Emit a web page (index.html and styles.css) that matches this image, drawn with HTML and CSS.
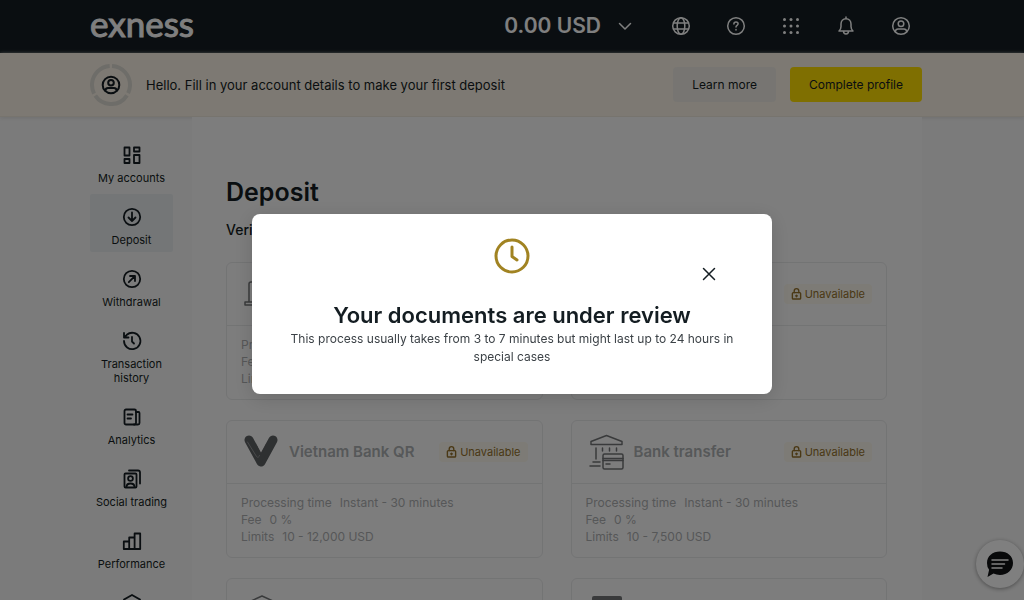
FILE: index.html
```html
<!DOCTYPE html>
<html lang="en">
<head>
<meta charset="utf-8">
<meta name="viewport" content="width=device-width, initial-scale=1">
<title>Deposit</title>
<link rel="stylesheet" href="styles.css">
</head>
<body>
<svg class="sprite" aria-hidden="true">
  <symbol id="user" viewBox="0 0 20 20"><circle cx="10" cy="10" r="8.3"/><circle cx="10" cy="7.8" r="2.8"/><path d="M4.3 15.6c.3-1.7 1.2-2.5 2.7-2.5h6c1.500 0 2.400.8 2.700 2.500"/></symbol>
  <symbol id="lock" viewBox="0 0 12 14"><rect x="1.500" y="5.500" width="9" height="7" rx="1"/><path d="M3.500 5.500V3.700a2.500 2.500 0 0 1 5 0v1.800M6 8.200v1.800M5 9h2"/></symbol>
</svg>
<header class="topbar">
  <div class="wrap topbar-row">
    <a class="logo" href="#">exness</a>
    <nav class="tools" aria-label="Account tools">
      <button class="balance" type="button">0.00 USD
        <svg class="chevron" viewBox="0 0 14 14"><path d="M1.500 4.500 7 10l5.500-5.500"/></svg>
      </button>
      <button class="tool" type="button" aria-label="Language"><svg viewBox="0 0 20 20"><circle cx="10" cy="10" r="8.300"/><ellipse cx="10" cy="10" rx="3.800" ry="8.300"/><path d="M2.500 7h15M2.500 13h15"/></svg></button>
      <button class="tool" type="button" aria-label="Help"><svg viewBox="0 0 20 20"><circle cx="10" cy="10" r="8.300"/><path d="M7.900 8c0-1.400 1-2 2.100-2s2.100.7 2.100 1.800c0 1.500-2.100 1.500-2.100 3.200M10 13.500v.5"/></svg></button>
      <button class="tool" type="button" aria-label="Apps"><svg class="dots" viewBox="0 0 20 20"><circle cx="3.500" cy="3.500" r="1.500"/><circle cx="10" cy="3.500" r="1.500"/><circle cx="16.500" cy="3.500" r="1.500"/><circle cx="3.500" cy="10" r="1.500"/><circle cx="10" cy="10" r="1.500"/><circle cx="16.500" cy="10" r="1.500"/><circle cx="3.500" cy="16.500" r="1.500"/><circle cx="10" cy="16.500" r="1.500"/><circle cx="16.500" cy="16.500" r="1.500"/></svg></button>
      <button class="tool" type="button" aria-label="Notifications"><svg viewBox="0 0 20 20"><path d="M10 1v1.500M3 15h14c-1.500-1.300-2-2.700-2-4.500V8c0-3-2-5.300-5-5.300S5 5 5 8v2.500c0 1.800-.5 3.200-2 4.500zM7.500 15c0 1.800 1 3 2.500 3s2.500-1.200 2.500-3"/></svg></button>
      <button class="tool" type="button" aria-label="Profile"><svg><use href="#user"/></svg></button>
    </nav>
  </div>
</header>
<section class="banner">
  <div class="wrap banner-row">
    <svg class="avatar" viewBox="0 0 42 42"><circle class="ring" cx="21" cy="21" r="19" pathLength="99" stroke-dasharray="31 2"/><use href="#user" x="11" y="11" width="20" height="20"/></svg>
    <p class="greeting">Hello. Fill in your account details to make your first deposit</p>
    <button class="btn btn-plain" type="button">Learn more</button>
    <button class="btn btn-brand" type="button">Complete profile</button>
  </div>
</section>
<div class="wrap page">
  <nav class="side" aria-label="Main">
    <a class="side-item" href="#"><svg viewBox="0 0 22 22"><path d="M3.500 3.500h5v8h-5zM13 3.500h5.500v4H13zM3.500 15h5v4h-5zM13 11h5.500v8H13z"/></svg>My accounts</a>
    <a class="side-item active" href="#" aria-current="page"><svg viewBox="0 0 22 22"><circle cx="11" cy="11" r="8.200"/><path d="M11 6.500v8.500M7.500 11.500 11 15l3.500-3.500"/></svg>Deposit</a>
    <a class="side-item" href="#"><svg viewBox="0 0 22 22"><circle cx="11" cy="11" r="8.200"/><path d="m7.800 14.200 6-6M9 8h5v5"/></svg>Withdrawal</a>
    <a class="side-item" href="#"><svg viewBox="0 0 22 22"><path d="M3 11a8.200 8.200 0 1 0 2.800-6.200L3 7.500M3 3v4.500h4.500M11 7v4.500l2 2"/></svg>Transaction history</a>
    <a class="side-item" href="#"><svg viewBox="0 0 22 22"><rect x="3.500" y="3.500" width="11.500" height="15" rx="1.500"/><path d="M15 6h2.500c.7 0 1 .3 1 1v10c0 1-.5 1.500-1.500 1.500h-4M6.500 8.500h5M6.500 12.500h3.500"/></svg>Analytics</a>
    <a class="side-item" href="#"><svg viewBox="0 0 22 22"><rect x="3.500" y="5.500" width="12" height="14" rx="1"/><circle cx="9.500" cy="10.500" r="2.400"/><path d="M5.500 19c0-2.500 1.500-3.500 4-3.500s4 1 4 3.500M8 2.500h9c1.200 0 2 .8 2 2v11"/></svg>Social trading</a>
    <a class="side-item" href="#"><svg viewBox="0 0 22 22"><path d="M2.800 11.500h5.400v7.500H2.800zM8.200 7.500h5.400V19H8.200zM13.600 3.500h5.600V19h-5.600z"/></svg>Performance</a>
    <a class="side-item" href="#" aria-label="Benefits"><svg viewBox="0 0 22 22"><path d="m3 7.500 8-4.500 8 4.500v8l-8 4.500-8-4.500z"/></svg></a>
  </nav>
  <main class="content">
    <h1 class="title">Deposit</h1>
    <h2 class="subtitle">Verification</h2>
    <div class="cards">
      <article class="card">
        <div class="card-head">
          <svg class="pay-icon" viewBox="0 0 36 36"><path d="M6 26V8q0-2 2-2h18q2 0 2 2v18M2 26h31v3H2z"/></svg>
        </div>
        <dl class="facts"><div><dt>Processing time</dt></div><div><dt>Fee</dt></div><div><dt>Limits</dt></div></dl>
      </article>
      <article class="card">
        <div class="card-head end">
          <span class="badge"><svg><use href="#lock"/></svg>Unavailable</span>
        </div>
      </article>
      <article class="card">
        <div class="card-head">
          <svg class="pay-icon" viewBox="0 0 36 36"><path class="vee" d="m6 6 12 22L30 6"/><path class="vee-fill" d="m13 9 5 12 5-11v10l-5 9z"/><path class="vee-line" d="m4.500 8 9 14.500c1 1.500 3 .5 3-1"/></svg>
          <h3 class="card-name">Vietnam Bank QR</h3>
          <span class="badge"><svg><use href="#lock"/></svg>Unavailable</span>
        </div>
        <dl class="facts"><div><dt>Processing time</dt><dd>Instant - 30 minutes</dd></div><div><dt>Fee</dt><dd>0 %</dd></div><div><dt>Limits</dt><dd>10 - 12,000 USD</dd></div></dl>
      </article>
      <article class="card">
        <div class="card-head">
          <svg class="pay-icon" viewBox="0 0 36 36"><path d="M3 10.500V7.500L18.500 1.500 34 7.500v3zM8 14v11M14.500 14v3M21.500 14v3M28.500 14v3M5 28h7M2 32h10"/><rect x="15" y="20" width="20" height="15" rx="1.500"/><path d="M15 24.500h20M15 26.500h20M18 30h4"/></svg>
          <h3 class="card-name">Bank transfer</h3>
          <span class="badge"><svg><use href="#lock"/></svg>Unavailable</span>
        </div>
        <dl class="facts"><div><dt>Processing time</dt><dd>Instant - 30 minutes</dd></div><div><dt>Fee</dt><dd>0 %</dd></div><div><dt>Limits</dt><dd>10 - 7,500 USD</dd></div></dl>
      </article>
      <article class="card">
        <div class="card-head"><svg class="pay-icon" viewBox="0 0 36 36"><path d="m8 9 11-5 11 5v16l-11 7-11-7z"/></svg></div>
      </article>
      <article class="card">
        <div class="card-head"><svg class="pay-icon" viewBox="0 0 36 36"><rect class="solid" x="4" y="4" width="30" height="28" rx="2"/></svg></div>
      </article>
    </div>
  </main>
</div>
<button class="chat" type="button" aria-label="Open chat"><svg viewBox="0 0 28 28"><path class="bubble" d="M14 1.500c7.500 0 13 4.700 13 11.500s-5.500 12-13 12c-2.500 0-4.500-.5-6.500-1.400L1.500 27l1.600-7.200A11 11 0 0 1 1 13C1 6.200 6.500 1.500 14 1.500z"/><path class="lines" d="M6 10h16M6 14h12.500M6 18h10"/></svg></button>
<div class="overlay">
  <div class="modal" role="dialog" aria-modal="true" aria-labelledby="modal-title">
    <button class="close" type="button" aria-label="Close"><svg viewBox="0 0 14 14"><path d="m1.500 1.500 11 11M12.500 1.500l-11 11"/></svg></button>
    <svg class="clock" viewBox="0 0 36 36"><circle cx="18" cy="18" r="16"/><path d="M18 9v9.500l5 3.500"/></svg>
    <h2 class="modal-title" id="modal-title">Your documents are under review</h2>
    <p class="modal-text">This process usually takes from 3 to 7 minutes but might last up to 24 hours in special cases</p>
  </div>
</div>
</body>
</html>
```
FILE: styles.css
```css
* { box-sizing: border-box; margin: 0; padding: 0; }
body {
  height: 100vh;
  overflow: hidden;
  background: #f7f7f7;
  color: #141d22;
  font: 12px/17px Inter, "Liberation Sans", sans-serif;
}
button { border: 0; background: none; color: inherit; font: inherit; cursor: pointer; }
a { color: inherit; text-decoration: none; }
svg { fill: none; stroke: currentColor; stroke-width: 1.5; stroke-linecap: round; stroke-linejoin: round; flex: none; }
.sprite { position: absolute; width: 0; height: 0; }
.wrap { width: calc(100% - 180px); max-width: 832px; margin: 0 auto; }
.topbar, .banner { padding-right: 12px; }
.topbar { background: #141d22; color: #fff; }
.topbar-row { display: flex; align-items: center; justify-content: space-between; height: 53px; }
.logo { font: 400 35px/40px Lato, Inter, sans-serif; padding-bottom: 8px; -webkit-text-stroke: 1px currentColor; }
.tools { display: flex; align-items: center; gap: 35px; padding: 0 11px 1px 0; }
.balance { display: flex; align-items: center; gap: 17px; font-size: 21px; font-weight: 600; line-height: 28px; white-space: nowrap; }
.chevron { width: 14px; height: 14px; }
.tool { display: flex; }
.tool svg { width: 20px; height: 20px; }
.balance + .tool { margin-left: 4px; }
.tool .dots { fill: currentColor; stroke: none; }
.banner { background: #fbf2e6; border-bottom: 1px solid #efe9dc; box-shadow: 0 1px 4px #dfdfdf; }
.banner-row { display: flex; align-items: center; gap: 14px; height: 63px; }
.avatar { width: 42px; height: 42px; stroke-width: 2; }
.ring { stroke: #dcdad2; stroke-width: 4; stroke-linecap: butt; transform: rotate(-87deg); transform-origin: center; }
.greeting { flex: 1; font-size: 13px; line-height: 20px; }
.btn { height: 35px; padding: 0 19px; border-radius: 4px; white-space: nowrap; }
.btn-plain { background: #efebe5; }
.btn-brand { background: #ffde02; }
.page { display: flex; gap: 19px; padding-right: 12px; max-width: 844px; }
.side { flex: none; width: 83px; display: flex; flex-direction: column; gap: 4px; padding-top: 15px; }
.side-item { display: flex; flex-direction: column; align-items: center; gap: 5px; padding: 12px 4px 5px; font-size: 11px; line-height: 14px; text-align: center; }
.side-item svg { width: 22px; height: 22px; stroke-width: 1.8; }
.active { background: #e8ecef; border-radius: 2px; }
.content { flex: 1; min-width: 0; padding: 57px 35px 0 34px; background: #fbfbfb; }
.title { font-size: 25px; line-height: 36px; font-weight: 600; }
.subtitle { margin: 11px 0 23px; font-size: 14px; line-height: 18px; font-weight: 500; }
.cards { display: grid; grid-template-columns: 1fr 1fr; gap: 20px 28px; }
.card { min-height: 138px; border: 1px solid #e7e8e9; border-radius: 6px; }
.card-head { display: flex; align-items: center; gap: 10px; height: 63px; padding: 0 14px 0 16px; border-bottom: 1px solid #e7e8e9; color: #737577; }
.end { justify-content: flex-end; }
.pay-icon { width: 36px; height: 36px; }
.vee { stroke: #5d6062; stroke-width: 9; }
.vee-fill { fill: #5d6062; stroke: none; }
.vee-line { stroke: #929496; stroke-width: 1; }
.solid { fill: #737577; stroke: none; }
.card-name { flex: 1; font-size: 15px; line-height: 20px; font-weight: 600; color: #adb0b2; white-space: nowrap; }
.badge { display: flex; align-items: center; gap: 3px; padding: 2px 7px; border-radius: 4px; background: #faf7ec; color: #94702a; font-size: 11px; line-height: 16px; }
.badge svg { width: 11px; height: 14px; }
.facts { padding: 10px 14px 8px; color: #adafb1; }
.facts div { display: flex; gap: 8px; }
.chat { position: fixed; right: 0; bottom: 12px; display: grid; place-items: center; width: 48px; height: 48px; border-radius: 50%; background: #fff; box-shadow: 0 1px 4px #999; }
.chat svg { width: 28px; height: 28px; }
.chat .bubble { fill: #101215; stroke: none; }
.chat .lines { stroke: #fff; }
.overlay { position: fixed; inset: 0; display: grid; place-items: center; padding: 8px 16px 0; background: rgba(0, 0, 0, .5); }
.modal { position: relative; width: 100%; max-width: 520px; padding: 24px 32px 28px; border-radius: 8px; background: #fff; text-align: center; box-shadow: 0 4px 20px rgba(0, 0, 0, .15); }
.clock { display: block; width: 36px; height: 36px; margin: 0 auto 26px; color: #a18322; stroke-width: 3; }
.close { position: absolute; top: 50px; right: 53px; display: grid; place-items: center; width: 20px; height: 20px; }
.close svg { width: 14px; height: 14px; }
.modal-title { font-size: 22px; line-height: 30px; font-weight: 600; }
.modal-text { line-height: 18px; color: #3c4247; }
```
